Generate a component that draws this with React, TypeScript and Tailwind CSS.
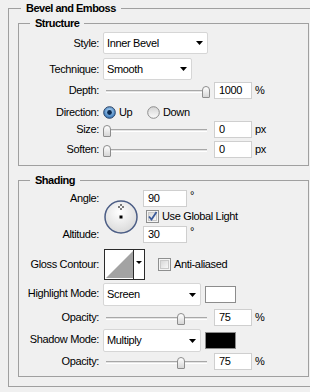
import type { ReactNode } from 'react';

const Label = ({ children }: { children: ReactNode }) => (
  <div className="w-[80px] shrink-0 text-right leading-[17px]">{children}</div>
);

const Arrow = () => (
  <svg width="7" height="4" viewBox="0 0 7 4" className="shrink-0">
    <polygon points="0,0 7,0 3.5,4" fill="#000" />
  </svg>
);

function Dropdown({ value, width }: { value: string; width: string }) {
  return (
    <div
      className={`ml-[4px] flex h-[22px] shrink-0 items-center justify-between rounded-[2px] border border-[#d6d6d6] bg-white pl-[3px] pr-[4px] ${width}`}
    >
      <span>{value}</span>
      <Arrow />
    </div>
  );
}

function Slider({ value, max }: { value: number; max: number }) {
  const left = Math.round((value / max) * 99);
  return (
    <div className="relative ml-[4px] h-full w-[107px] shrink-0">
      <div className="absolute left-[3px] right-[3px] top-[8px] h-[3px] border-t border-b border-t-[#a8a8a8] border-b-white bg-[#e4e4e4]" />
      <div
        className="absolute top-[4px] h-[12px] w-[8px] rounded-t-[4px] rounded-b-[1px] border border-[#8d8d8d] bg-gradient-to-b from-white to-[#d6d6d6]"
        style={{ left }}
      />
    </div>
  );
}

function NumberBox({ value, width = 'w-[38px]', ml = 'ml-[4px]' }: { value: string; width?: string; ml?: string }) {
  return (
    <div className={`${ml} h-[17px] shrink-0 border border-[#cfcfcf] bg-white pl-[4px] leading-[15px] ${width}`}>
      {value}
    </div>
  );
}

function SliderRow({ label, value, max, unit, className }: { label: string; value: number; max: number; unit: string; className: string }) {
  return (
    <div className={`flex h-[17px] items-center ${className}`}>
      <Label>{label}</Label>
      <Slider value={value} max={max} />
      <NumberBox value={String(value)} />
      <span className="ml-[3px] leading-[17px]">{unit}</span>
    </div>
  );
}

function Radio({ checked }: { checked: boolean }) {
  return checked ? (
    <svg width="13" height="13" viewBox="0 0 13 13" className="shrink-0">
      <defs>
        <radialGradient id="radOn" cx="50%" cy="40%" r="60%">
          <stop offset="0" stopColor="#bfe0fa" />
          <stop offset="1" stopColor="#2f70b4" />
        </radialGradient>
      </defs>
      <circle cx="6.5" cy="6.5" r="5.8" fill="url(#radOn)" stroke="#2b4366" strokeWidth="1" />
      <circle cx="6.5" cy="6.5" r="2.4" fill="#0c2b52" />
    </svg>
  ) : (
    <svg width="13" height="13" viewBox="0 0 13 13" className="shrink-0">
      <defs>
        <linearGradient id="radOff" x1="0" y1="0" x2="0" y2="1">
          <stop offset="0" stopColor="#d4d4d4" />
          <stop offset="1" stopColor="#fbfbfb" />
        </linearGradient>
      </defs>
      <circle cx="6.5" cy="6.5" r="5.8" fill="url(#radOff)" stroke="#8c8c8c" strokeWidth="1" />
    </svg>
  );
}

function Checkbox({ checked }: { checked: boolean }) {
  return (
    <svg width="13" height="13" viewBox="0 0 13 13" className="shrink-0">
      <defs>
        <linearGradient id="cbFill" x1="0" y1="0" x2="1" y2="1">
          <stop offset="0" stopColor="#d6d6d6" />
          <stop offset="1" stopColor="#fafafa" />
        </linearGradient>
      </defs>
      <rect x="0.5" y="0.5" width="12" height="12" fill="#f4f4f4" stroke="#8e8f8f" />
      <rect x="2.5" y="2.5" width="8" height="8" fill="url(#cbFill)" stroke="#c9c9c9" />
      {checked && <path d="M3 6.5 L5.5 9.5 L10.5 2" fill="none" stroke="#3a5a9a" strokeWidth="1.8" />}
    </svg>
  );
}

const Dial = () => (
  <svg width="34" height="34" viewBox="0 0 34 34" className="ml-[5px] mt-[10px] shrink-0">
    <defs>
      <radialGradient id="dialFill" cx="45%" cy="35%" r="65%">
        <stop offset="0" stopColor="#ffffff" />
        <stop offset="1" stopColor="#dadada" />
      </radialGradient>
    </defs>
    <circle cx="17" cy="17" r="16" fill="url(#dialFill)" stroke="#4b5d85" strokeWidth="1.5" />
    <path d="M17 4 V6 M17 8 V10 M14 7 H16 M18 7 H20" stroke="#000" strokeWidth="1" />
    <rect x="15.5" y="15.5" width="3" height="3" fill="#000" />
  </svg>
);

const Contour = () => (
  <svg width="41" height="31" viewBox="0 0 41 31" className="ml-[5px] shrink-0">
    <rect x="0.5" y="0.5" width="40" height="30" fill="#fff" stroke="#2a2a2a" />
    <polygon points="2,29 29,2 29,29" fill="#a3a3a3" />
    <line x1="29.5" y1="1" x2="29.5" y2="30" stroke="#2a2a2a" />
    <polygon points="32,12 38,12 35,15" fill="#000" />
  </svg>
);

function Group({ title, className, children }: { title: string; className: string; children: ReactNode }) {
  return (
    <fieldset className={`border border-[#a0a0a0] ${className}`}>
      <legend className="ml-[11px] px-[5px] font-bold leading-[15px] tracking-[-0.5px]">{title}</legend>
      {children}
    </fieldset>
  );
}

export default function App() {
  return (
    <div className="h-[392px] w-[310px] overflow-hidden bg-[#f0f0f0] pt-[1px] font-['Liberation_Sans',Arial,sans-serif] text-[11px] tracking-[-0.35px] text-black">
      <fieldset className="ml-[8px] w-[320px] border border-[#a0a0a0] pb-[9px]">
        <legend className="ml-[12px] px-[5px] font-bold leading-[15px] tracking-[-0.5px]">Bevel and Emboss</legend>

        <Group title="Structure" className="ml-[9px] w-[291px] pb-[7px]">
          <div className="mt-[1px] flex h-[22px] items-center">
            <Label>Style:</Label>
            <Dropdown value="Inner Bevel" width="w-[105px]" />
          </div>
          <div className="mt-[4px] flex h-[22px] items-center">
            <Label>Technique:</Label>
            <Dropdown value="Smooth" width="w-[89px]" />
          </div>
          <SliderRow label="Depth:" value={1000} max={1000} unit="%" className="mt-[2px]" />
          <div className="mt-[5px] flex h-[17px] items-center">
            <Label>Direction:</Label>
            <div className="ml-[4px] flex w-[44px] items-center gap-[3px]">
              <Radio checked />
              <span>Up</span>
            </div>
            <div className="flex items-center gap-[3px]">
              <Radio checked={false} />
              <span>Down</span>
            </div>
          </div>
          <SliderRow label="Size:" value={0} max={250} unit="px" className="" />
          <SliderRow label="Soften:" value={0} max={16} unit="px" className="mt-[3px]" />
        </Group>

        <Group title="Shading" className="ml-[9px] mt-[7px] w-[291px] pb-[6px]">
          <div className="mt-[2px] flex h-[53px]">
            <div className="flex w-[80px] shrink-0 flex-col text-right">
              <div className="leading-[17px]">Angle:</div>
              <div className="mt-auto leading-[17px]">Altitude:</div>
            </div>
            <Dial />
            <div className="ml-[5px] flex flex-col">
              <div className="flex h-[17px] items-start">
                <NumberBox value="90" width="w-[44px]" ml="ml-0" />
                <span className="ml-[3px] leading-[10px]">°</span>
              </div>
              <div className="ml-[3px] mt-[3px] flex h-[13px] items-center gap-[3px]">
                <Checkbox checked />
                <span>Use Global Light</span>
              </div>
              <div className="mt-[3px] flex h-[17px] items-start">
                <NumberBox value="30" width="w-[44px]" ml="ml-0" />
                <span className="ml-[3px] leading-[10px]">°</span>
              </div>
            </div>
          </div>
          <div className="mt-[6px] flex h-[31px] items-center">
            <Label>Gloss Contour:</Label>
            <Contour />
            <div className="ml-[13px] flex items-center gap-[3px]">
              <Checkbox checked={false} />
              <span>Anti-aliased</span>
            </div>
          </div>
          <div className="mt-[3px] flex h-[23px] items-start">
            <div className="w-[80px] shrink-0 text-right leading-[21px]">Highlight Mode:</div>
            <Dropdown value="Screen" width="w-[98px] h-[23px]" />
            <div className="ml-[4px] mt-[3px] h-[17px] w-[31px] shrink-0 border border-[#8c8c8c] bg-white" />
          </div>
          <SliderRow label="Opacity:" value={75} max={100} unit="%" className="mt-[3px]" />
          <div className="mt-[3px] flex h-[23px] items-start">
            <div className="w-[80px] shrink-0 text-right leading-[21px]">Shadow Mode:</div>
            <Dropdown value="Multiply" width="w-[98px] h-[23px]" />
            <div className="ml-[4px] mt-[3px] h-[17px] w-[31px] shrink-0 border border-[#8c8c8c] bg-black" />
          </div>
          <SliderRow label="Opacity:" value={75} max={100} unit="%" className="mt-[1px]" />
        </Group>
      </fieldset>
    </div>
  );
}
